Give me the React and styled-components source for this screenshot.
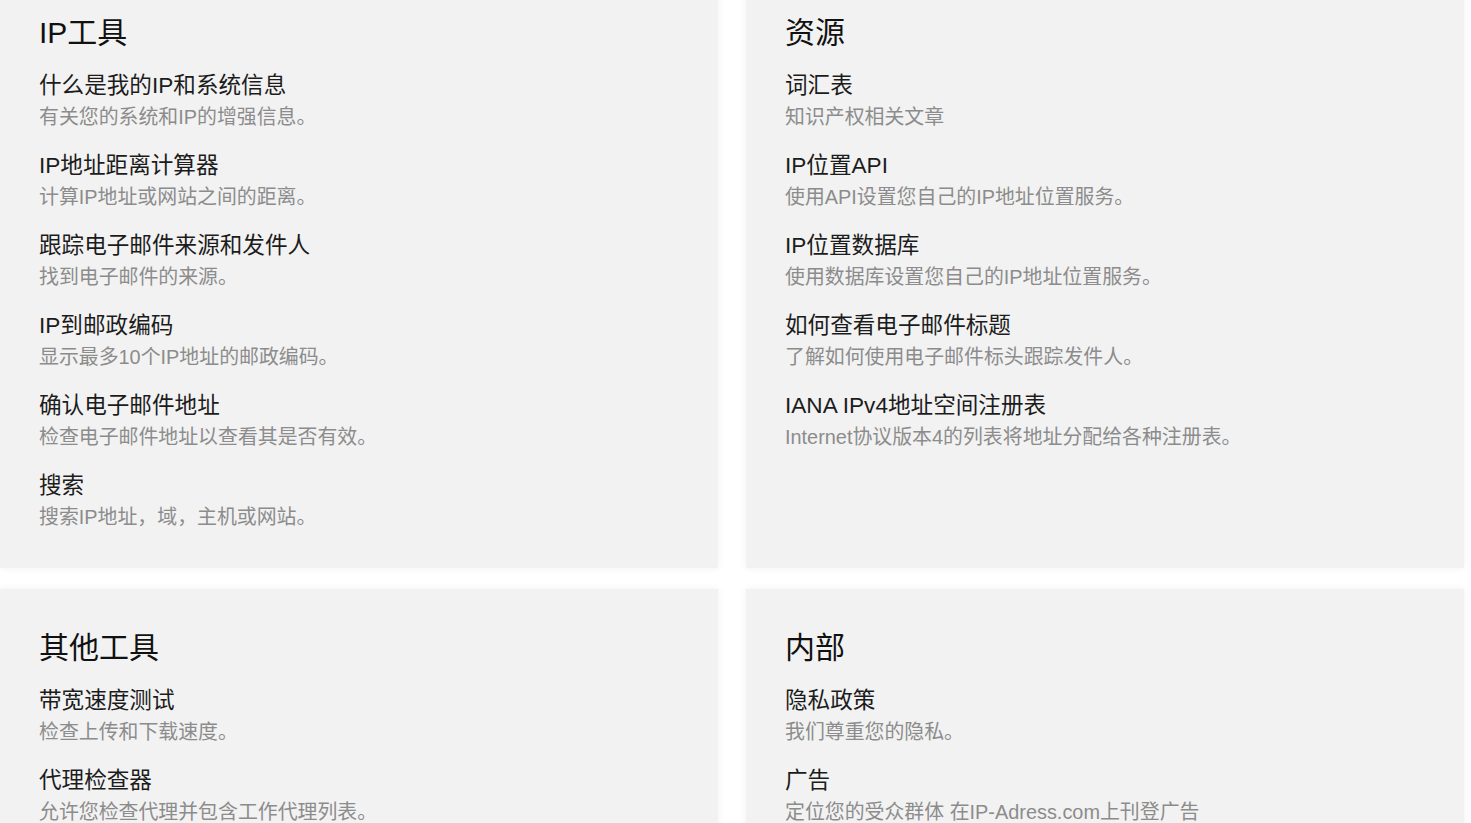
import React from 'react'
import styled, { createGlobalStyle } from 'styled-components'

const GlobalStyle = createGlobalStyle`
  html, body {
    margin: 0;
    padding: 0;
    background: #ffffff;
    overflow: hidden;
  }
  body {
    font-family: "Liberation Sans", "Noto Sans CJK SC", Arial, sans-serif;
  }
`

const Page = styled('div')`
  display: grid;
  grid-template-columns: 718px 718px;
  column-gap: 28px;
  row-gap: 21px;
  margin-top: -26px;
  width: 1464px;
`

const Card = styled('section')`
  display: flex;
  flex-flow: column nowrap;
  background-color: #f2f2f2;
  box-shadow: 0 0 8px rgba(0, 0, 0, 0.06);
  padding: 41px 39px 18px 39px;
`

const Heading = styled('h2')`
  margin: 0 0 19px 0;
  font-size: 30px;
  line-height: 36px;
  font-weight: 400;
  color: #111111;
`

const Item = styled('a')`
  display: flex;
  flex-flow: column nowrap;
  margin-bottom: 18px;
  text-decoration: none;
`

const Title = styled('span')`
  font-size: 22.6px;
  line-height: 32px;
  color: #1c1c1c;
  white-space: nowrap;
`

const Desc = styled('span')`
  font-size: 19.9px;
  line-height: 30px;
  color: #8c8c8c;
  white-space: nowrap;
`

const sections = [
  {
    heading: 'IP工具',
    items: [
      ['什么是我的IP和系统信息', '有关您的系统和IP的增强信息。'],
      ['IP地址距离计算器', '计算IP地址或网站之间的距离。'],
      ['跟踪电子邮件来源和发件人', '找到电子邮件的来源。'],
      ['IP到邮政编码', '显示最多10个IP地址的邮政编码。'],
      ['确认电子邮件地址', '检查电子邮件地址以查看其是否有效。'],
      ['搜索', '搜索IP地址，域，主机或网站。'],
    ],
  },
  {
    heading: '资源',
    items: [
      ['词汇表', '知识产权相关文章'],
      ['IP位置API', '使用API设置您自己的IP地址位置服务。'],
      ['IP位置数据库', '使用数据库设置您自己的IP地址位置服务。'],
      ['如何查看电子邮件标题', '了解如何使用电子邮件标头跟踪发件人。'],
      ['IANA IPv4地址空间注册表', 'Internet协议版本4的列表将地址分配给各种注册表。'],
    ],
  },
  {
    heading: '其他工具',
    items: [
      ['带宽速度测试', '检查上传和下载速度。'],
      ['代理检查器', '允许您检查代理并包含工作代理列表。'],
    ],
  },
  {
    heading: '内部',
    items: [
      ['隐私政策', '我们尊重您的隐私。'],
      ['广告', '定位您的受众群体 在IP-Adress.com上刊登广告'],
    ],
  },
]

function App() {
  return (
    <>
      <GlobalStyle />
      <Page>
        {sections.map((s) => (
          <Card key={s.heading}>
            <Heading>{s.heading}</Heading>
            {s.items.map(([t, d]) => (
              <Item key={t} href="#">
                <Title>{t}</Title>
                <Desc>{d}</Desc>
              </Item>
            ))}
          </Card>
        ))}
      </Page>
    </>
  )
}

export default App
